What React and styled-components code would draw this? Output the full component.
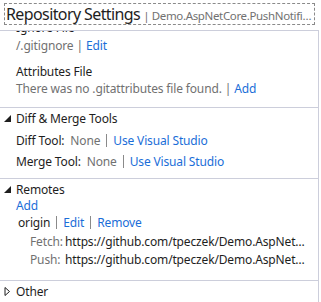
import React from 'react';
import styled, { createGlobalStyle } from 'styled-components';

const Global = createGlobalStyle`
  html, body { margin: 0; padding: 0; background: #fff; }
  body {
    font-family: "Noto Sans", "Open Sans", sans-serif;
    font-size: 12px;
    letter-spacing: -0.15px;
    color: #1e1e1e;
    width: 321px;
    height: 302px;
    overflow: hidden;
  }
`;

const Page = styled.div`
  width: 321px;
  height: 302px;
  overflow: hidden;
  display: flex;
  flex-direction: column;
`;

const Header = styled.div`
  height: 31px;
  flex-shrink: 0;
  padding: 3px 4px 0 4px;
  box-sizing: border-box;
  border-bottom: 1px solid #cccedb;
  width: 319px;
`;

const TitleBox = styled.div`
  height: 22px;
  border: 1px dashed #8a8a8a;
  box-sizing: border-box;
  display: flex;
  align-items: center;
  white-space: nowrap;
  overflow: hidden;
  padding-left: 1px;
`;

const Title = styled.span`
  font-size: 16px;
  color: #1e1e1e;
  letter-spacing: -0.6px;
  flex-shrink: 0;
`;

const Sub = styled.span`
  font-size: 11.5px;
  letter-spacing: -0.35px;
  color: #717171;
  margin-left: 3px;
  margin-top: 2px;
  overflow: hidden;
  text-overflow: ellipsis;
  min-width: 0;
`;

const Body = styled.div`
  flex: 1;
  width: 319px;
  box-sizing: border-box;
  border-right: 1px solid #cccedb;
  overflow: hidden;
`;

const Section = styled.div`
  border-bottom: ${p => (p.last ? 'none' : '1px solid #cccedb')};
  padding: ${p => p.pad || '0'};
  margin-top: ${p => p.offset || 0}px;
`;

const Row = styled.div`
  display: flex;
  align-items: center;
  height: ${p => p.h || 17}px;
  padding-left: ${p => p.indent || 16}px;
  white-space: nowrap;
  margin-top: ${p => p.mt || 0}px;
`;

const Expander = styled.div`
  display: flex;
  align-items: center;
  height: ${p => p.h || 20}px;
  white-space: nowrap;
`;

const Arrow = styled.span`
  width: 16px;
  display: flex;
  justify-content: center;
  align-items: center;
  margin-left: -1px;
  margin-right: 1px;
`;

const Gray = styled.span`
  color: #717171;
`;

const Link = styled.span`
  color: #1a6ed8;
`;

const Pipe = styled.span`
  color: #717171;
  margin: 0 3px;
`;

const Sep = styled.span`
  display: inline-block;
  width: 1px;
  height: 13px;
  background: #8a8a8a;
  margin: 0 ${p => p.m || 6}px;
`;

const Label = styled.span`
  display: inline-block;
  min-width: ${p => p.w || 0}px;
`;

const Url = styled.span`
  overflow: hidden;
  text-overflow: ellipsis;
  width: 246px;
`;

const Down = () => (
  <svg width="7" height="7" viewBox="0 0 7 7"><path d="M7 0 L7 7 L0 7 Z" fill="#1e1e1e" /></svg>
);

const Right = () => (
  <svg width="7" height="9" viewBox="0 0 7 9"><path d="M1 0.5 L5.5 4.5 L1 8.5 Z" fill="none" stroke="#1e1e1e" strokeWidth="1" /></svg>
);

export default function App() {
  return (
    <Page>
      <Global />
      <Header>
        <TitleBox>
          <Title>Repository Settings</Title>
          <Sub>| Demo.AspNetCore.PushNotifications</Sub>
        </TitleBox>
      </Header>
      <Body>
        <Section pad="0 0 10px 0" offset={-12}>
          <Row h={17}>Ignore File</Row>
          <Row h={17} mt={1}>
            <Gray>/.gitignore</Gray>
            <Pipe>|</Pipe>
            <Link>Edit</Link>
          </Row>
          <Row h={17} mt={9}>Attributes File</Row>
          <Row h={17}>
            <Gray>There was no .gitattributes file found.</Gray>
            <Pipe>|</Pipe>
            <Link>Add</Link>
          </Row>
        </Section>
        <Section pad="0 0 7px 0">
          <Expander>
            <Arrow><Down /></Arrow>
            Diff &amp; Merge Tools
          </Expander>
          <Row h={20} mt={2}>
            Diff Tool:&nbsp;&nbsp;<Gray>None</Gray>
            <Sep />
            <Link>Use Visual Studio</Link>
          </Row>
          <Row h={20} mt={1}>
            Merge Tool:&nbsp;&nbsp;<Gray>None</Gray>
            <Sep />
            <Link>Use Visual Studio</Link>
          </Row>
        </Section>
        <Section pad="1px 0 12px 0">
          <Expander h={18}>
            <Arrow><Down /></Arrow>
            Remotes
          </Expander>
          <Row h={14}><Link>Add</Link></Row>
          <Row h={18} indent={18} mt={1}>
            origin
            <Sep />
            <Link>Edit</Link>
            <Sep />
            <Link>Remove</Link>
          </Row>
          <Row h={18} indent={30} mt={1}>
            <Label w={35}><Gray>Fetch:</Gray></Label>
            <Url>https://github.com/tpeczek/Demo.AspNetCore.PushNotifications.git</Url>
          </Row>
          <Row h={18} indent={30}>
            <Label w={35}><Gray>Push:</Gray></Label>
            <Url>https://github.com/tpeczek/Demo.AspNetCore.PushNotifications.git</Url>
          </Row>
        </Section>
        <Section last>
          <Expander>
            <Arrow><Right /></Arrow>
            Other
          </Expander>
        </Section>
      </Body>
    </Page>
  );
}
